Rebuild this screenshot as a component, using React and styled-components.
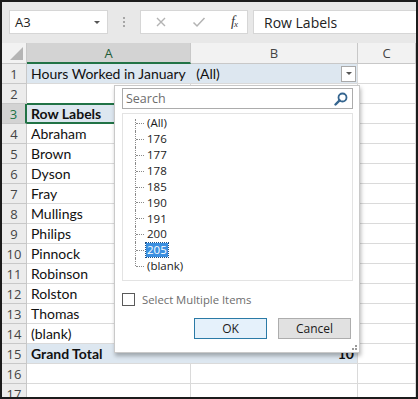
import React from 'react';
import styled, { createGlobalStyle, css } from 'styled-components';

const Global = createGlobalStyle`
  html, body { margin: 0; padding: 0; background: #fff; }
  * { box-sizing: border-box; }
`;

const Frame = styled.div`
  position: relative;
  width: 418px;
  height: 399px;
  border: 2px solid #1c1c1c;
  background: #ffffff;
  overflow: hidden;
  display: flex;
  flex-direction: column;
  font-family: Lato, "Liberation Sans", sans-serif;
`;

/* ---------- formula bar ---------- */

const FormulaBar = styled.div`
  height: 41px;
  flex-shrink: 0;
  background: #e8e8e8;
  display: flex;
  align-items: flex-start;
  padding: 8px 0 0 7px;
  font-family: "Open Sans", "Liberation Sans", sans-serif;
`;

const NameBox = styled.div`
  width: 99px;
  height: 24px;
  background: #fff;
  border: 1px solid #d6d6d6;
  display: flex;
  align-items: center;
  justify-content: space-between;
  padding: 0 7px 0 5px;
  font-size: 13px;
  color: #222;
`;

const SmallArrow = styled.span`
  width: 0;
  height: 0;
  border-left: 3px solid transparent;
  border-right: 3px solid transparent;
  border-top: 3px solid ${p => p.$color || '#666'};
`;

const Grip = styled.div`
  width: 32px;
  height: 24px;
  display: flex;
  flex-direction: column;
  align-items: center;
  justify-content: center;
  gap: 2px;
  span {
    width: 2px;
    height: 2px;
    background: #a6a6a6;
  }
`;

const FxBox = styled.div`
  width: 108px;
  height: 24px;
  background: #fff;
  border: 1px solid #d6d6d6;
  display: flex;
  align-items: center;
  padding: 0 10px 0 14px;
  justify-content: space-between;
`;

const Fx = styled.span`
  font-family: "Liberation Serif", serif;
  font-style: italic;
  font-size: 14px;
  color: #333;
  letter-spacing: -1px;
  sub { font-size: 9px; vertical-align: -1px; }
`;

const FormulaInput = styled.div`
  flex: 1;
  margin-left: 5px;
  height: 24px;
  background: #fff;
  border: 1px solid #d6d6d6;
  border-right: none;
  display: flex;
  align-items: center;
  padding-left: 10px;
  font-size: 14px;
  color: #222;
`;

/* ---------- sheet ---------- */

const Sheet = styled.div`
  display: grid;
  grid-template-columns: 25px 164px 167px 1fr;
  grid-template-rows: 21px;
  grid-auto-rows: 20px;
  font-size: 14px;
  color: #111;
`;

const ColHead = styled.div`
  background: ${p => (p.$active ? '#d3d3d3' : '#f2f2f2')};
  border-right: 1px solid #c8c8c8;
  border-bottom: ${p => (p.$active ? '2px solid #217346' : '1px solid #c8c8c8')};
  display: flex;
  align-items: center;
  justify-content: center;
  font-family: "Open Sans", "Liberation Sans", sans-serif;
  font-size: 13px;
  color: ${p => (p.$active ? '#1e5c37' : '#444')};
`;

const Corner = styled(ColHead)`
  align-items: flex-end;
  justify-content: flex-end;
  padding: 0 3px 3px 0;
`;

const RowHead = styled.div`
  background: ${p => (p.$active ? '#d3d3d3' : '#ececec')};
  border-right: ${p => (p.$active ? '2px solid #217346' : '1px solid #c8c8c8')};
  border-bottom: 1px solid #c8c8c8;
  display: flex;
  align-items: center;
  justify-content: center;
  font-family: "Open Sans", "Liberation Sans", sans-serif;
  font-size: 13px;
  color: ${p => (p.$active ? '#217346' : '#444')};
`;

const Cell = styled.div`
  border-right: 1px solid #dadada;
  border-bottom: 1px solid #dadada;
  display: flex;
  align-items: center;
  justify-content: space-between;
  padding: 0 3px 0 4px;
  white-space: nowrap;
  overflow: hidden;
  grid-column: span ${p => p.$span || 1};
  ${p => p.$pivot && css`background: #dde7f0;`}
  ${p => p.$bold && css`font-weight: 700;`}
  ${p => p.$selected && css`
    border-top: 2px solid #217346;
    border-bottom: 2px solid #217346;
    margin-top: -1px;
  `}
`;

const FilterButton = styled.span`
  width: 15px;
  height: 16px;
  background: #fff;
  border: 1px solid #a9a9a9;
  display: flex;
  align-items: center;
  justify-content: center;
  margin-right: -2px;
`;

/* ---------- filter dropdown ---------- */

const Dropdown = styled.div`
  position: absolute;
  left: 112px;
  top: 83px;
  width: 246px;
  height: 268px;
  background: #fff;
  border: 1px solid #c9c9c9;
  box-shadow: 1px 3px 4px rgba(0, 0, 0, 0.28);
  padding: 2px 6px 0 7px;
  display: flex;
  flex-direction: column;
  font-family: "Open Sans", "Liberation Sans", sans-serif;
  font-size: 11.5px;
  color: #1a1a1a;
`;

const SearchBox = styled.div`
  height: 21px;
  border: 1px solid #acacac;
  display: flex;
  align-items: center;
  justify-content: space-between;
  padding: 0 4px 0 3px;
  color: #6d6d6d;
  font-size: 12.5px;
`;

const ValueList = styled.div`
  margin-top: 4px;
  height: 168px;
  border: 1px solid #e3e3e3;
  padding: 1px 0 0 12px;
  display: flex;
  flex-direction: column;
`;

const Item = styled.div`
  height: 15.9px;
  display: flex;
  align-items: center;
  line-height: 1;
`;

const Branch = styled.span`
  position: relative;
  width: 10px;
  align-self: stretch;
  flex-shrink: 0;
  margin-right: 1px;
  &::before {
    content: '';
    position: absolute;
    left: 0;
    top: ${p => (p.$first ? '4px' : '0')};
    bottom: ${p => (p.$last ? '8px' : '0')};
    border-left: 1px dotted #8a8a8a;
  }
  &::after {
    content: '';
    position: absolute;
    left: 1px;
    right: 1px;
    top: 8px;
    border-top: 1px dotted #8a8a8a;
  }
`;

const ItemLabel = styled.span`
  padding: 1px 1px;
  ${p => p.$selected && css`
    background: #3b8fe0;
    color: #fff;
    outline: 1px dotted #1b4f86;
  `}
`;

const CheckRow = styled.label`
  display: flex;
  align-items: center;
  gap: 7px;
  margin-top: 11px;
  color: #6d6d6d;
  font-size: 11.3px;
`;

const Box = styled.span`
  width: 13px;
  height: 13px;
  border: 1px solid #5a5a5a;
  background: #fff;
`;

const Buttons = styled.div`
  display: flex;
  justify-content: flex-end;
  gap: 11px;
  margin-top: 11px;
  padding-right: 2px;
`;

const Button = styled.div`
  width: 73px;
  height: 21px;
  display: flex;
  align-items: center;
  justify-content: center;
  font-size: 12px;
  color: #1a1a1a;
  background: ${p => (p.$primary ? '#e5f1fb' : '#e1e1e1')};
  border: 1px solid ${p => (p.$primary ? '#2a7aa6' : '#adadad')};
`;

const Resize = styled.div`
  align-self: flex-end;
  margin: 6px -4px 0 0;
  display: grid;
  grid-template-columns: repeat(3, 2px);
  gap: 1px;
  span { width: 2px; height: 2px; }
  span.on { background: #9a9a9a; }
`;

const SearchIcon = () => (
  <svg width="14" height="14" viewBox="0 0 14 14">
    <circle cx="8.5" cy="5.5" r="4" fill="none" stroke="#35658f" strokeWidth="1.8" />
    <line x1="5.6" y1="8.4" x2="1.5" y2="12.5" stroke="#35658f" strokeWidth="2.4" strokeLinecap="round" />
  </svg>
);

const CrossIcon = () => (
  <svg width="12" height="12" viewBox="0 0 12 12">
    <path d="M2 2 L10 10 M10 2 L2 10" stroke="#b3b3b3" strokeWidth="1.4" />
  </svg>
);

const CheckIcon = () => (
  <svg width="14" height="12" viewBox="0 0 14 12">
    <path d="M1.5 6.5 L5 10 L12.5 2" fill="none" stroke="#b3b3b3" strokeWidth="1.5" />
  </svg>
);

const CornerTriangle = () => (
  <svg width="13" height="13" viewBox="0 0 13 13">
    <polygon points="13,0 13,13 0,13" fill="#b5b5b5" />
  </svg>
);

const names = ['Abraham', 'Brown', 'Dyson', 'Fray', 'Mullings', 'Philips', 'Pinnock', 'Robinson', 'Rolston', 'Thomas', '(blank)'];
const values = ['(All)', '176', '177', '178', '185', '190', '191', '200', '205', '(blank)'];

export default function App() {
  return (
    <>
      <Global />
      <Frame>
        <FormulaBar>
          <NameBox>
            A3
            <SmallArrow $color="#555" />
          </NameBox>
          <Grip><span /><span /><span /></Grip>
          <FxBox>
            <CrossIcon />
            <CheckIcon />
            <Fx>f<sub>x</sub></Fx>
          </FxBox>
          <FormulaInput>Row Labels</FormulaInput>
        </FormulaBar>

        <Sheet>
          <Corner><CornerTriangle /></Corner>
          <ColHead $active>A</ColHead>
          <ColHead>B</ColHead>
          <ColHead>C</ColHead>

          <RowHead>1</RowHead>
          <Cell $span={2} $pivot>
            <span>Hours Worked in January&nbsp;&nbsp;&nbsp;(All)</span>
            <FilterButton><SmallArrow $color="#555" /></FilterButton>
          </Cell>
          <Cell />

          <RowHead>2</RowHead>
          <Cell /><Cell /><Cell />

          <RowHead $active>3</RowHead>
          <Cell $pivot $bold $selected>Row Labels</Cell>
          <Cell /><Cell />

          {names.map((n, i) => (
            <React.Fragment key={n + i}>
              <RowHead>{i + 4}</RowHead>
              <Cell>{n}</Cell>
              <Cell /><Cell />
            </React.Fragment>
          ))}

          <RowHead>15</RowHead>
          <Cell $span={2} $pivot $bold>
            <span>Grand Total</span>
            <span>10</span>
          </Cell>
          <Cell />

          <RowHead>16</RowHead>
          <Cell /><Cell /><Cell />
          <RowHead>17</RowHead>
          <Cell /><Cell /><Cell />
        </Sheet>

        <Dropdown>
          <SearchBox>
            Search
            <SearchIcon />
          </SearchBox>
          <ValueList>
            {values.map((v, i) => (
              <Item key={v + i}>
                <Branch $first={i === 0} $last={i === values.length - 1} />
                <ItemLabel $selected={v === '205'}>{v}</ItemLabel>
              </Item>
            ))}
          </ValueList>
          <CheckRow>
            <Box />
            Select Multiple Items
          </CheckRow>
          <Buttons>
            <Button $primary>OK</Button>
            <Button>Cancel</Button>
          </Buttons>
          <Resize>
            <span /><span /><span className="on" />
            <span /><span className="on" /><span className="on" />
          </Resize>
        </Dropdown>
      </Frame>
    </>
  );
}
